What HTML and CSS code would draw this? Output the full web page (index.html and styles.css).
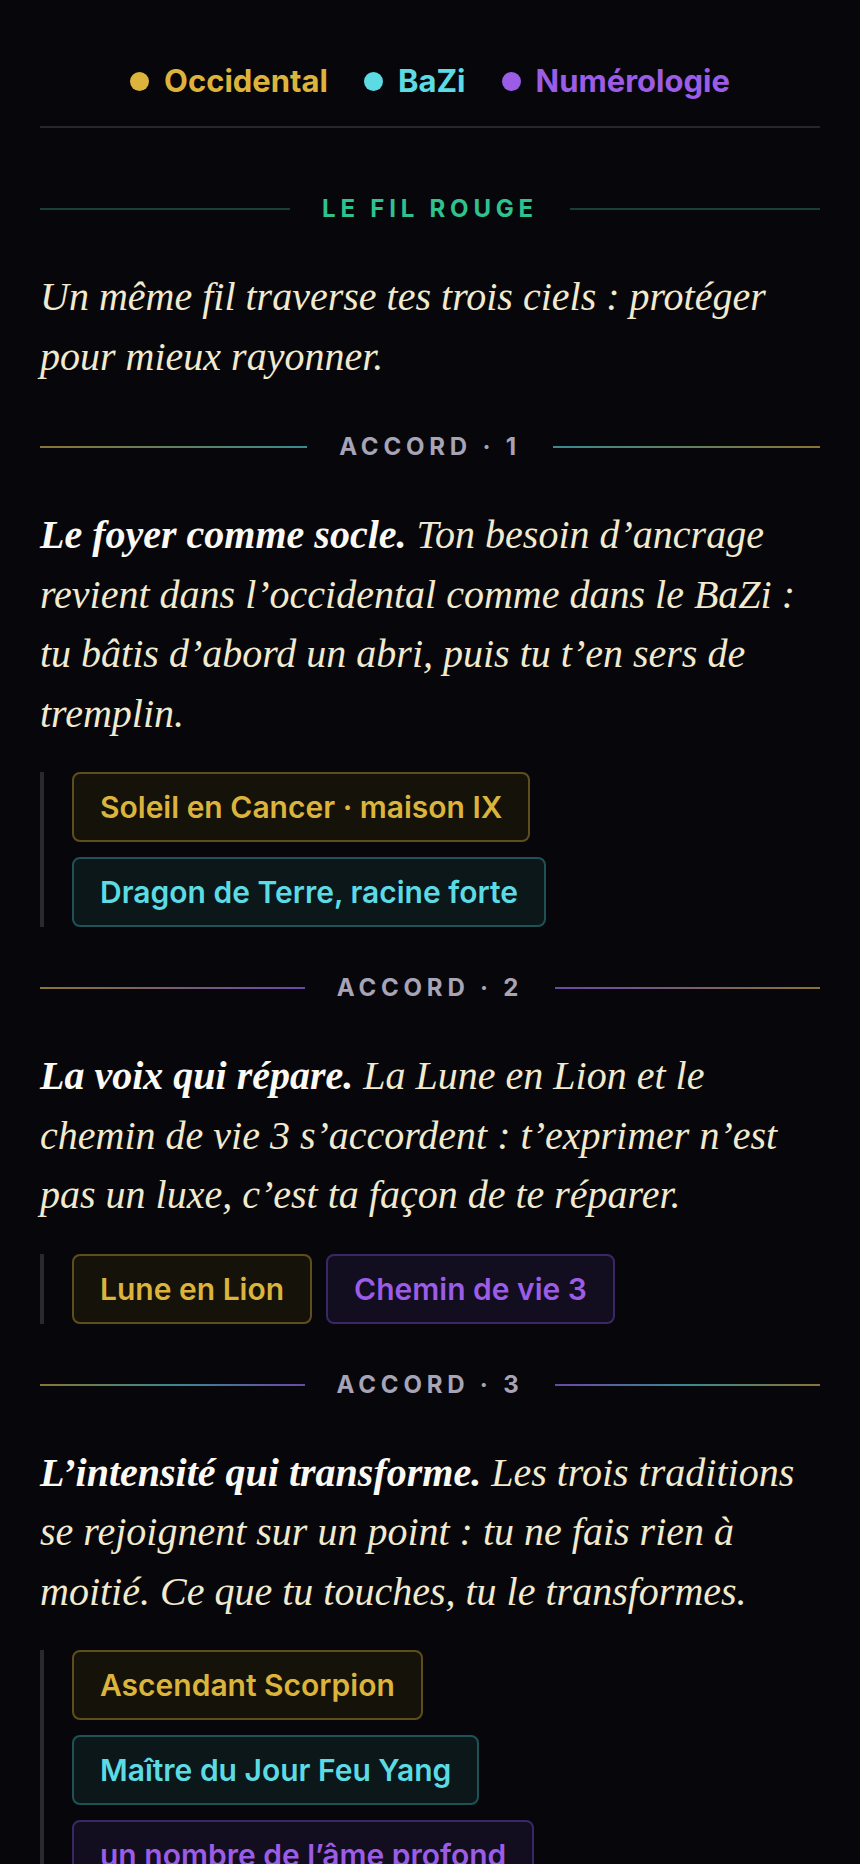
FILE: index.html
```html
<!DOCTYPE html>
<html lang="fr">
<head>
<meta charset="UTF-8" />
<meta name="viewport" content="width=device-width, initial-scale=1" />
<title>Le fil rouge</title>
<link rel="stylesheet" href="styles.css">
</head>
<body>

<div class="page">
  <div class="legend">
    <span class="legend-item gold">Occidental</span>
    <span class="legend-item teal">BaZi</span>
    <span class="legend-item violet">Numérologie</span>
  </div>

  <section class="thread">
    <h2 class="rule rule-green">Le fil rouge</h2>
    <p class="text">Un même fil traverse tes trois ciels : protéger pour mieux rayonner.</p>
  </section>

  <section class="accord">
    <h3 class="rule rule-gold-teal">Accord · 1</h3>
    <p class="text"><strong>Le foyer comme socle.</strong> Ton besoin d’ancrage revient dans l’occidental comme dans le BaZi : tu bâtis d’abord un abri, puis tu t’en sers de tremplin.</p>
    <div class="tags">
      <span class="tag gold">Soleil en Cancer · maison IX</span>
      <span class="tag teal">Dragon de Terre, racine forte</span>
    </div>
  </section>

  <section class="accord">
    <h3 class="rule rule-gold-violet">Accord · 2</h3>
    <p class="text"><strong>La voix qui répare.</strong> La Lune en Lion et le chemin de vie 3 s’accordent : t’exprimer n’est pas un luxe, c’est ta façon de te réparer.</p>
    <div class="tags">
      <span class="tag gold">Lune en Lion</span>
      <span class="tag violet">Chemin de vie 3</span>
    </div>
  </section>

  <section class="accord">
    <h3 class="rule rule-all">Accord · 3</h3>
    <p class="text"><strong>L’intensité qui transforme.</strong> Les trois traditions se rejoignent sur un point : tu ne fais rien à moitié. Ce que tu touches, tu le transformes.</p>
    <div class="tags">
      <span class="tag gold">Ascendant Scorpion</span>
      <span class="tag teal">Maître du Jour Feu Yang</span>
      <span class="tag violet">un nombre de l’âme profond</span>
    </div>
  </section>
</div>

</body>
</html>
```

FILE: styles.css
```css
body {
  margin: 0;
  background: #07070b;
  font-family: Inter, "Noto Sans", sans-serif;
}
.page {
  padding: 0 40px 80px;
}

/* legend */
.legend {
  display: flex;
  justify-content: center;
  gap: 36px;
  padding: 63px 0 27px;
  border-bottom: 2px solid #26262b;
}
.legend-item {
  display: flex;
  align-items: center;
  gap: 15px;
  font-size: 31px;
  font-weight: 700;
  line-height: 36px;
}
.legend-item::before {
  content: "";
  width: 19px;
  height: 19px;
  border-radius: 50%;
  background: currentColor;
}
.gold { color: #dcb43c; }
.teal { color: #5cdbe4; }
.violet { color: #9b5ce6; }

/* section rules */
.rule {
  display: flex;
  align-items: center;
  gap: 32px;
  margin: 0;
  font-size: 24px;
  font-weight: 700;
  line-height: 30px;
  letter-spacing: 0.2em;
  text-transform: uppercase;
  color: #a6a4b6;
}
.rule::before,
.rule::after {
  content: "";
  flex: 1;
  height: 2px;
}
.rule-green { color: #2fc28f; }
.rule-green::before,
.rule-green::after { background: #183f37; }
.rule-gold-teal::before { background: linear-gradient(to right, #8a7434, #3a8a8f); }
.rule-gold-teal::after { background: linear-gradient(to right, #3a8a8f, #8a7434); }
.rule-gold-violet::before { background: linear-gradient(to right, #8a7434, #6a48aa); }
.rule-gold-violet::after { background: linear-gradient(to right, #6a48aa, #8a7434); }
.rule-all::before { background: linear-gradient(to right, #8a7434, #3a8a8f, #6a48aa); }
.rule-all::after { background: linear-gradient(to right, #6a48aa, #3a8a8f, #8a7434); }

.thread {
  margin-top: 66px;
}
.accord {
  margin-top: 46px;
}

.text {
  margin: 43px 0 0;
  font-family: "Liberation Serif", "DejaVu Serif", serif;
  font-style: italic;
  font-size: 40px;
  line-height: 59.5px;
  color: #f1eacf;
}
.text strong {
  color: #fbf9f3;
}

/* tags */
.tags {
  display: flex;
  flex-wrap: wrap;
  align-items: flex-start;
  gap: 15px 14px;
  margin-top: 29px;
  padding-left: 28px;
  border-left: 4px solid #29292f;
}
.tag {
  padding: 17px 26px;
  border: 2px solid;
  border-radius: 8px;
  font-size: 30px;
  font-weight: 600;
  line-height: 32px;
}
.tag.gold {
  background: #15120a;
  border-color: #5f4e1d;
}
.tag.teal {
  background: #0b1719;
  border-color: #1e5257;
}
.tag.violet {
  background: #120d1f;
  border-color: #3a2866;
}
```
